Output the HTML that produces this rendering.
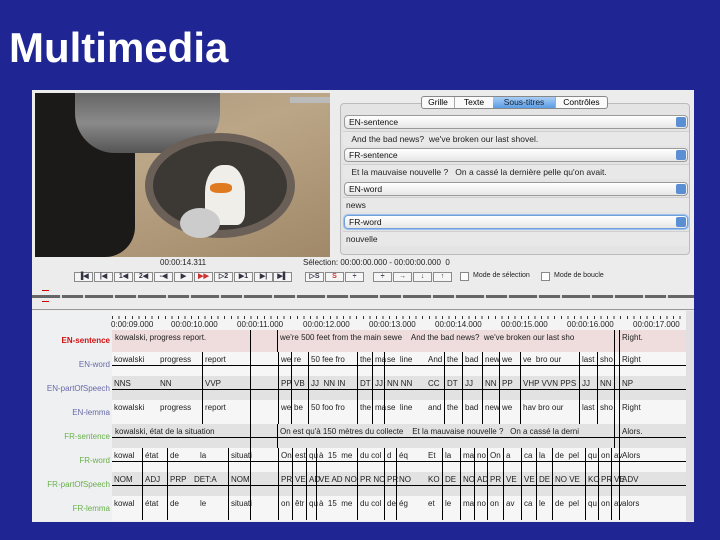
<!DOCTYPE html>
<html><head><meta charset="utf-8"><style>
*{margin:0;padding:0;box-sizing:border-box}
body{width:720px;height:540px;background:#1f2592;position:relative;overflow:hidden;font-family:"Liberation Sans",sans-serif}
.a{position:absolute}
h1{position:absolute;left:9px;top:24px;font-size:42px;font-weight:bold;color:#fff;letter-spacing:0}
#win{left:32px;top:90px;width:662px;height:432px;background:#ececec}
.t{font-size:8px;color:#222;white-space:nowrap}
.pop{position:absolute;left:344px;width:344px;height:14px;border:1px solid #9a9a9a;border-radius:4px;background:linear-gradient(#fff,#e6e6e6);font-size:8.5px;color:#111;padding:1px 4px}
.pop:after{content:"";position:absolute;right:1px;top:1px;width:10px;height:10px;border-radius:2px;background:#5b8fd4}
.txt{position:absolute;left:343px;width:346px;height:15px;background:#e8e8e8;border-top:1px solid #d0d0d0;font-size:8.5px;color:#222;padding:2px 6px}
.btn{position:absolute;top:272px;width:19px;height:10px;border:1px solid #8a8a8a;background:#f5f5f5;font-size:7px;color:#334;text-align:center;line-height:8px;font-weight:bold}
.row{position:absolute;left:112px;width:574px;height:24px}
.row span{position:absolute;top:0;height:24px;font-size:8px;color:#222;white-space:nowrap;padding:3px 0 0 2px}
.row span.l{border-left:1px solid #000}
.row i{position:absolute;left:0;right:0;top:13px;height:1px;background:#000}
.lab{position:absolute;left:32px;width:78px;text-align:right;font-size:8px;white-space:nowrap}
.tl{position:absolute;top:320px;font-size:8px;color:#222;white-space:nowrap}
</style></head><body>
<h1>Multimedia</h1>
<div class="a" id="win"></div>
<!-- video -->
<div class="a" style="left:35px;top:93px;width:295px;height:164px;background:linear-gradient(160deg,#a8957c,#bba687 40%,#a08868);overflow:hidden">
 <div class="a" style="left:0;top:0;width:100px;height:164px;background:#1c1a18;border-radius:0 60px 30px 0"></div>
 <div class="a" style="left:40px;top:0;width:145px;height:60px;background:linear-gradient(#666,#8a8a8a,#555);border-radius:0 0 40px 40px"></div>
 <div class="a" style="left:110px;top:40px;width:150px;height:105px;background:#3c3834;border-radius:50%;border:8px solid #6a6058"></div>
 <div class="a" style="left:170px;top:72px;width:40px;height:60px;background:#f0eee8;border-radius:45% 45% 20% 20%"></div>
 <div class="a" style="left:175px;top:90px;width:22px;height:10px;background:#e07a20;border-radius:40%"></div>
 <div class="a" style="left:145px;top:115px;width:40px;height:30px;background:#ccc;border-radius:50%"></div>
 <div class="a" style="left:255px;top:4px;width:40px;height:6px;background:#bbb"></div>
</div>
<div class="a t" style="left:160px;top:258px">00:00:14.311</div>
<div class="a t" style="left:303px;top:258px">Sélection: 00:00:00.000 - 00:00:00.000 &nbsp;0</div>
<!-- tabs -->
<div class="a" style="left:340px;top:103px;width:350px;height:152px;border:1px solid #bbb;border-radius:4px;background:#e4e4e4"></div>
<div class="a" style="left:421px;top:96px;width:187px;height:13px;border:1px solid #888;border-radius:3px;background:#fafafa;font-size:8.5px;display:flex">
 <div style="width:33px;text-align:center;border-right:1px solid #aaa">Grille</div>
 <div style="width:38px;text-align:center">Texte</div>
 <div style="width:62px;text-align:center;background:linear-gradient(#a8cdf5,#5c9de4);color:#123">Sous-titres</div>
 <div style="flex:1;text-align:center;border-left:1px solid #aaa">Contrôles</div>
</div>
<div class="pop" style="top:115px">EN-sentence</div>
<div class="txt" style="top:131px">&nbsp;And the bad news? &nbsp;we've broken our last shovel.</div>
<div class="pop" style="top:148px">FR-sentence</div>
<div class="txt" style="top:164px">&nbsp;Et la mauvaise nouvelle ? &nbsp;&nbsp;On a cassé la dernière pelle qu'on avait.</div>
<div class="pop" style="top:182px">EN-word</div>
<div class="txt" style="top:197px;padding-left:3px">news</div>
<div class="pop" style="top:215px;border-color:#6fa0dc;box-shadow:0 0 0 1px #9cc1ee">FR-word</div>
<div class="txt" style="top:231px;padding-left:3px">nouvelle</div>
<!-- buttons -->
<div class="btn" style="left:74px">▐◀</div><div class="btn" style="left:94px">|◀</div><div class="btn" style="left:114px">1◀</div><div class="btn" style="left:134px">2◀</div><div class="btn" style="left:154px">-◀</div><div class="btn" style="left:174px">▶</div><div class="btn" style="left:194px;color:#c33">▶▶</div><div class="btn" style="left:214px">▷2</div><div class="btn" style="left:234px">▶1</div><div class="btn" style="left:254px">▶|</div><div class="btn" style="left:273px">▶▌</div>
<div class="btn" style="left:305px">▷S</div><div class="btn" style="left:325px;color:#c33">S</div><div class="btn" style="left:345px">÷</div>
<div class="btn" style="left:373px">÷</div><div class="btn" style="left:393px">→</div><div class="btn" style="left:413px">↓</div><div class="btn" style="left:433px">↑</div>
<div class="a" style="left:460px;top:272px;width:9px;height:9px;border:1px solid #888;background:#fff"></div>
<div class="a t" style="left:473px;top:272px;font-size:7px">Mode de sélection</div>
<div class="a" style="left:541px;top:272px;width:9px;height:9px;border:1px solid #888;background:#fff"></div>
<div class="a t" style="left:554px;top:272px;font-size:7px">Mode de boucle</div>
<!-- red marks and bar -->
<div class="a" style="left:42px;top:290px;width:7px;height:1px;background:#c00"></div>
<div class="a" style="left:42px;top:301px;width:7px;height:1px;background:#c00"></div>
<div class="a" style="left:32px;top:295px;width:662px;height:3px;background:repeating-linear-gradient(90deg,#666 0 28px,#ddd 28px 30px,#666 30px 51px,#ddd 51px 53px)"></div>
<div class="a" style="left:32px;top:309px;width:662px;height:1px;background:#999"></div>
<!-- timeline -->
<div class="a" style="left:32px;top:311px;width:80px;height:210px;background:#eef0f2"></div>
<div class="a" style="left:112px;top:311px;width:574px;height:210px;background:#f4f4f4"></div>
<div class="a" style="left:686px;top:311px;width:8px;height:210px;background:#e0e0e0"></div>
<div class="a" style="left:112px;top:316px;width:574px;height:3px;background:repeating-linear-gradient(90deg,#333 0 1px,transparent 1px 6.6px)"></div>
<div class="tl" style="left:111px">0:00:09.000</div>
<div class="tl" style="left:171px">00:00:10.000</div>
<div class="tl" style="left:237px">00:00:11.000</div>
<div class="tl" style="left:303px">00:00:12.000</div>
<div class="tl" style="left:369px">00:00:13.000</div>
<div class="tl" style="left:435px">00:00:14.000</div>
<div class="tl" style="left:501px">00:00:15.000</div>
<div class="tl" style="left:567px">00:00:16.000</div>
<div class="tl" style="left:633px">00:00:17.000</div>

<div class="lab" style="top:336px;color:#d01010;font-weight:bold">EN-sentence</div>
<div class="lab" style="top:360px;color:#6a6aa8">EN-word</div>
<div class="lab" style="top:384px;color:#6a6aa8">EN-partOfSpeech</div>
<div class="lab" style="top:408px;color:#6a6aa8">EN-lemma</div>
<div class="lab" style="top:432px;color:#6ab04a">FR-sentence</div>
<div class="lab" style="top:456px;color:#6ab04a">FR-word</div>
<div class="lab" style="top:480px;color:#6ab04a">FR-partOfSpeech</div>
<div class="lab" style="top:504px;color:#6ab04a">FR-lemma</div>

<div class="row" style="top:330px;height:22px;background:#efdcdc"><span style="left:1px">kowalski, progress report.</span><span class="l" style="left:138px"></span><span class="l" style="left:165px">we're 500 feet from the main sewe &nbsp;&nbsp;&nbsp;And the bad news? &nbsp;we've broken our last sho</span><span class="l" style="left:502px"></span><span class="l" style="left:507px">Right.</span></div>

<div class="row" style="top:352px;background:#f6f6f6"><i></i><span style="left:0">kowalski</span><span style="left:46px">progress</span><span class="l" style="left:90px">report</span><span class="l" style="left:138px"></span><span class="l" style="left:166px">we</span><span class="l" style="left:179px">re</span><span class="l" style="left:196px">50 fee fro</span><span class="l" style="left:245px">the</span><span class="l" style="left:260px">ma</span><span class="l" style="left:272px">se &nbsp;line</span><span style="left:314px">And</span><span class="l" style="left:332px">the</span><span class="l" style="left:350px">bad</span><span class="l" style="left:370px">new</span><span class="l" style="left:387px">we</span><span class="l" style="left:408px">ve &nbsp;bro our</span><span class="l" style="left:467px">last</span><span class="l" style="left:485px">sho</span><span class="l" style="left:502px"></span><span class="l" style="left:507px">Right</span></div>

<div class="row" style="top:376px;background:#e2e2e2"><i></i><span style="left:0">NNS</span><span style="left:46px">NN</span><span class="l" style="left:90px">VVP</span><span class="l" style="left:138px"></span><span class="l" style="left:166px">PP</span><span class="l" style="left:179px">VB</span><span class="l" style="left:196px">JJ &nbsp;NN IN</span><span class="l" style="left:245px">DT</span><span class="l" style="left:260px">JJ</span><span class="l" style="left:272px">NN NN</span><span style="left:314px">CC</span><span class="l" style="left:332px">DT</span><span class="l" style="left:350px">JJ</span><span class="l" style="left:370px">NN</span><span class="l" style="left:387px">PP</span><span class="l" style="left:408px">VHP VVN PPS</span><span class="l" style="left:467px">JJ</span><span class="l" style="left:485px">NN</span><span class="l" style="left:502px"></span><span class="l" style="left:507px">NP</span></div>

<div class="row" style="top:400px;background:#f6f6f6"><span style="left:0">kowalski</span><span style="left:46px">progress</span><span class="l" style="left:90px">report</span><span class="l" style="left:138px"></span><span class="l" style="left:166px">we</span><span class="l" style="left:179px">be</span><span class="l" style="left:196px">50 foo fro</span><span class="l" style="left:245px">the</span><span class="l" style="left:260px">ma</span><span class="l" style="left:272px">se &nbsp;line</span><span style="left:314px">and</span><span class="l" style="left:332px">the</span><span class="l" style="left:350px">bad</span><span class="l" style="left:370px">new</span><span class="l" style="left:387px">we</span><span class="l" style="left:408px">hav bro our</span><span class="l" style="left:467px">last</span><span class="l" style="left:485px">sho</span><span class="l" style="left:502px"></span><span class="l" style="left:507px">Right</span></div>

<div class="row" style="top:424px;background:#e2e2e2"><i></i><span style="left:1px">kowalski, état de la situation</span><span class="l" style="left:138px"></span><span class="l" style="left:165px">On est qu'à 150 mètres du collecte &nbsp;&nbsp;&nbsp;Et la mauvaise nouvelle ? &nbsp;&nbsp;On a cassé la derni</span><span class="l" style="left:502px"></span><span class="l" style="left:507px">Alors.</span></div>

<div class="row" style="top:448px;background:#f6f6f6"><i></i><span style="left:0">kowal</span><span class="l" style="left:30px">état</span><span class="l" style="left:55px">de</span><span style="left:86px">la</span><span class="l" style="left:116px">situati</span><span class="l" style="left:138px"></span><span class="l" style="left:166px">On</span><span class="l" style="left:180px">est</span><span class="l" style="left:194px">qu</span><span class="l" style="left:204px">à &nbsp;15 &nbsp;me</span><span class="l" style="left:245px">du col</span><span class="l" style="left:272px">d</span><span class="l" style="left:284px">éq</span><span style="left:314px">Et</span><span class="l" style="left:330px">la</span><span class="l" style="left:348px">ma</span><span class="l" style="left:362px">no</span><span class="l" style="left:375px">On</span><span class="l" style="left:391px">a</span><span class="l" style="left:409px">ca</span><span class="l" style="left:424px">la</span><span class="l" style="left:440px">de &nbsp;pel</span><span class="l" style="left:473px">qu</span><span class="l" style="left:486px">on</span><span class="l" style="left:499px">av</span><span class="l" style="left:507px">Alors</span></div>

<div class="row" style="top:472px;background:#e2e2e2"><i></i><span style="left:0">NOM</span><span class="l" style="left:30px">ADJ</span><span class="l" style="left:55px">PRP</span><span style="left:80px">DET:A</span><span class="l" style="left:116px">NOM</span><span class="l" style="left:138px"></span><span class="l" style="left:166px">PR</span><span class="l" style="left:180px">VE</span><span class="l" style="left:194px">AD</span><span class="l" style="left:204px">VE AD NO</span><span class="l" style="left:245px">PR NO</span><span class="l" style="left:272px">PR</span><span class="l" style="left:284px">NO</span><span style="left:314px">KO</span><span class="l" style="left:330px">DE</span><span class="l" style="left:348px">NO</span><span class="l" style="left:362px">AD</span><span class="l" style="left:375px">PR</span><span class="l" style="left:391px">VE</span><span class="l" style="left:409px">VE</span><span class="l" style="left:424px">DE</span><span class="l" style="left:440px">NO VE</span><span class="l" style="left:473px">KO</span><span class="l" style="left:486px">PR</span><span class="l" style="left:499px">VE</span><span class="l" style="left:507px">ADV</span></div>

<div class="row" style="top:496px;background:#f6f6f6"><span style="left:0">kowal</span><span class="l" style="left:30px">état</span><span class="l" style="left:55px">de</span><span style="left:86px">le</span><span class="l" style="left:116px">situati</span><span class="l" style="left:138px"></span><span class="l" style="left:166px">on</span><span class="l" style="left:180px">êtr</span><span class="l" style="left:194px">qu</span><span class="l" style="left:204px">à &nbsp;15 &nbsp;me</span><span class="l" style="left:245px">du col</span><span class="l" style="left:272px">de</span><span class="l" style="left:284px">ég</span><span style="left:314px">et</span><span class="l" style="left:330px">le</span><span class="l" style="left:348px">ma</span><span class="l" style="left:362px">no</span><span class="l" style="left:375px">on</span><span class="l" style="left:391px">av</span><span class="l" style="left:409px">ca</span><span class="l" style="left:424px">le</span><span class="l" style="left:440px">de &nbsp;pel</span><span class="l" style="left:473px">qu</span><span class="l" style="left:486px">on</span><span class="l" style="left:499px">av</span><span class="l" style="left:507px">alors</span></div>
</body></html>
